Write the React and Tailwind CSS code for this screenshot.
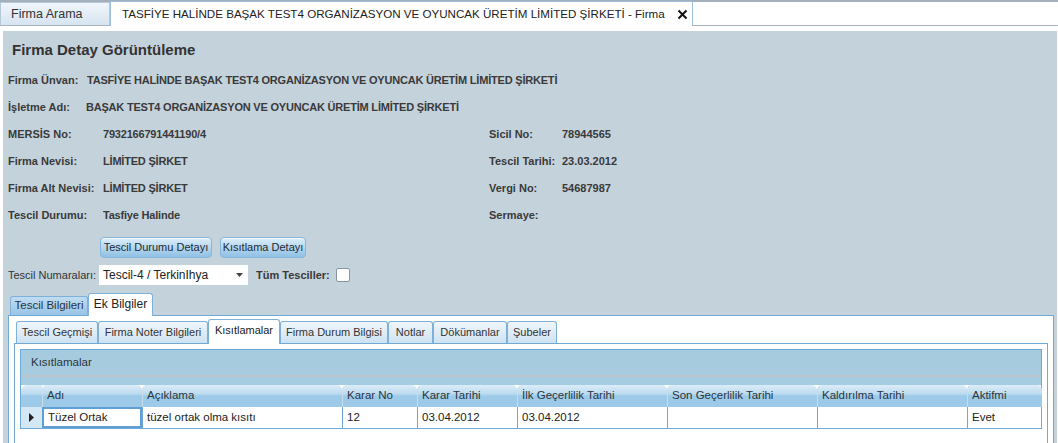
import React from "react";

const F = "font-['Liberation_Sans',Arial,sans-serif]";

function Row({ label, value, labelW, rLabel, rValue }) {
  return (
    <div className="flex h-[27px] items-center whitespace-nowrap text-[11px] font-bold text-[#3a3a3a]">
      <div className="shrink-0" style={{ width: labelW }}>{label}</div>
      <div className="w-[386px] shrink-0 tracking-[-0.2px]">{value}</div>
      {rLabel !== undefined && (
        <>
          <div className="w-[73px] shrink-0">{rLabel}</div>
          <div>{rValue}</div>
        </>
      )}
    </div>
  );
}

function Btn({ children, w }) {
  return (
    <div
      className="flex h-[21px] items-center justify-center whitespace-nowrap rounded-[4px] border border-[#86b6da] bg-gradient-to-b from-[#dcedf9] via-[#b5d7ef] to-[#8fc0e4] text-[11px] text-[#1e2a33] shadow-[inset_0_1px_0_#f2f9ff]"
      style={{ width: w }}
    >
      {children}
    </div>
  );
}

const innerTabs = [
  ["Tescil Geçmişi", 82],
  ["Firma Noter Bilgileri", 110],
  ["Kısıtlamalar", 72, true],
  ["Firma Durum Bilgisi", 108],
  ["Notlar", 45],
  ["Dökümanlar", 74],
  ["Şubeler", 50],
];

const cols = [
  ["Adı", 100],
  ["Açıklama", 200],
  ["Karar No", 75],
  ["Karar Tarihi", 100],
  ["İlk Geçerlilik Tarihi", 150],
  ["Son Geçerlilik Tarihi", 150],
  ["Kaldırılma Tarihi", 150],
  ["Aktifmi", 75],
];
const row = ["Tüzel Ortak", "tüzel ortak olma kısıtı", "12", "03.04.2012", "03.04.2012", "", "", "Evet"];

const headerBg =
  "bg-[linear-gradient(to_bottom,#dcecf8_0%,#bddbef_40%,#9dcae8_50%,#9dcae8_100%)]";

export default function App() {
  return (
    <div className={`${F} h-[443px] w-[1058px] overflow-hidden bg-white text-[#333]`}>
      {/* top tab strip */}
      <div className="h-[2px] bg-[#a3afba]" />
      <div className="flex h-[24px] items-end border-b border-[#a9b4bd]">
        <div className="flex h-[23px] w-[110px] items-center border border-b-0 border-[#b4c8da] bg-gradient-to-b from-[#f1f6fb] to-[#d6e4f1] pl-[10px] text-[12.5px] text-[#333]">
          Firma Arama
        </div>
        <div className="relative -mb-px flex h-[25px] w-[583px] items-center whitespace-nowrap border border-b-0 border-[#9cc0de] bg-white pl-[11px] text-[11.6px] text-[#222]">
          TASFİYE HALİNDE BAŞAK TEST4 ORGANİZASYON VE OYUNCAK ÜRETİM LİMİTED ŞİRKETİ - Firma
          <svg className="absolute right-[4px] top-[7px]" width="11" height="11" viewBox="0 0 11 11">
            <path d="M1.5 1.5 L9.5 9.5 M9.5 1.5 L1.5 9.5" stroke="#111" strokeWidth="2" />
          </svg>
        </div>
      </div>
      <div className="h-[5px]" />

      {/* main panel */}
      <div className="ml-[3px] mr-[1px] h-[412px] bg-[#c4d2dc]">
        <div className="h-[36px] pl-[9px] pt-[9px] text-[15px] font-bold leading-[20px] text-[#333]">
          Firma Detay Görüntüleme
        </div>
        <div className="pl-[5px]">
          <Row label="Firma Ünvan:" labelW={79} value="TASFİYE HALİNDE BAŞAK TEST4 ORGANİZASYON VE OYUNCAK ÜRETİM LİMİTED ŞİRKETİ" />
          <Row label="İşletme Adı:" labelW={78} value="BAŞAK TEST4 ORGANİZASYON VE OYUNCAK ÜRETİM LİMİTED ŞİRKETİ" />
          <Row label="MERSİS No:" labelW={95} value="7932166791441190/4" rLabel="Sicil No:" rValue="78944565" />
          <Row label="Firma Nevisi:" labelW={95} value="LİMİTED ŞİRKET" rLabel="Tescil Tarihi:" rValue="23.03.2012" />
          <Row label="Firma Alt Nevisi:" labelW={95} value="LİMİTED ŞİRKET" rLabel="Vergi No:" rValue="54687987" />
          <Row label="Tescil Durumu:" labelW={95} value="Tasfiye Halinde" rLabel="Sermaye:" rValue="" />
        </div>

        <div className="ml-[97px] mt-[8px] flex gap-[8px]">
          <Btn w={112}>Tescil Durumu Detayı</Btn>
          <Btn w={86}>Kısıtlama Detayı</Btn>
        </div>

        <div className="mt-[7px] flex h-[20px] items-center pl-[5px]">
          <div className="w-[91px] shrink-0 whitespace-nowrap text-[11px] text-[#333]">Tescil Numaraları:</div>
          <div className="relative flex h-[20px] w-[149px] shrink-0 items-center whitespace-nowrap bg-white pl-[4px] text-[12px] text-[#222]">
            Tescil-4 / TerkinIhya
            <svg className="absolute right-[5px] top-[8px]" width="7" height="4" viewBox="0 0 7 4">
              <path d="M0 0 H7 L3.5 4 Z" fill="#444" />
            </svg>
          </div>
          <div className="ml-[8px] whitespace-nowrap text-[11px] font-bold text-[#3a3a3a]">Tüm Tesciller:</div>
          <div className="ml-[6px] h-[14px] w-[14px] rounded-[2px] border border-[#8a96a0] bg-white" />
        </div>

        {/* outer tabs */}
        <div className="ml-[5px] mr-[3px] mt-[8px]">
          <div className="flex h-[22px] items-end pl-[2px]">
            <div className="flex h-[19px] w-[78px] items-center justify-center whitespace-nowrap rounded-t-[3px] border border-b-0 border-[#7fb0d8] bg-gradient-to-b from-[#c0dcf1] to-[#97c4e7] text-[11.5px] text-[#2a3540]">
              Tescil Bilgileri
            </div>
            <div className="relative z-10 -mb-px flex h-[23px] w-[65px] items-center justify-center whitespace-nowrap rounded-t-[3px] border border-b-0 border-[#7fb0d8] bg-white pb-[3px] text-[12px] text-[#222]">
              Ek Bilgiler
            </div>
          </div>
          <div className="h-[129px] border border-[#6fa9d8] bg-white px-[5px] pt-[3px]">
            {/* inner tabs */}
            <div className="flex h-[24px] items-end pl-[2px]">
              {innerTabs.map(([t, w, active]) =>
                active ? (
                  <div
                    key={t}
                    className="relative z-10 -mb-px flex h-[25px] items-center justify-center whitespace-nowrap rounded-t-[3px] border border-b-0 border-[#7fb0d8] bg-white pb-[3px] text-[11px] text-[#222]"
                    style={{ width: w }}
                  >
                    {t}
                  </div>
                ) : (
                  <div
                    key={t}
                    className="flex h-[22px] items-center justify-center whitespace-nowrap rounded-t-[3px] border border-b-0 border-[#7fb0d8] bg-gradient-to-b from-[#f0f6fb] to-[#cde2f2] text-[11px] text-[#333]"
                    style={{ width: w }}
                  >
                    {t}
                  </div>
                )
              )}
            </div>
            <div className="h-[120px] border border-[#6fa9d8] bg-white pl-[5px] pr-[5px] pt-[5px]">
              <div className="border border-b-0 border-[#6fa9d8]">
                <div className="flex h-[25px] items-center bg-[#a6cbde] pl-[10px] text-[11.5px] text-[#2a3540]">
                  Kısıtlamalar
                </div>
                <div className="h-[2px] bg-[#bcc7cd]" />
                <div className="h-[8px] bg-[#a6cce2]" />
                <div className="flex h-[22px]">
                  <div className={`w-[21px] shrink-0 rounded-tl-[6px] ${headerBg}`} />
                  {cols.map(([c, w]) => (
                    <div
                      key={c}
                      className={`flex shrink-0 items-center whitespace-nowrap rounded-t-[5px] border-l border-[#c7dded] ${headerBg} pl-[4px] text-[11.5px] text-[#2a3540]`}
                      style={{ width: w }}
                    >
                      {c}
                    </div>
                  ))}
                </div>
                <div className="flex h-[22px] border-b border-[#6fa9d8]">
                  <div className="flex w-[21px] shrink-0 items-center justify-center bg-[#d4e7f4]">
                    <svg width="5" height="9" viewBox="0 0 5 9">
                      <path d="M0 0 L5 4.5 L0 9 Z" fill="#222" />
                    </svg>
                  </div>
                  {row.map((v, i) => (
                    <div
                      key={i}
                      className={`flex shrink-0 items-center whitespace-nowrap pl-[4px] text-[11.5px] text-[#222] ${
                        i === 0 ? "border-2 border-[#5f9fd3] bg-white" : "border-l border-[#6fa9d8]"
                      }`}
                      style={{ width: cols[i][1] }}
                    >
                      {v}
                    </div>
                  ))}
                </div>
              </div>
            </div>
          </div>
        </div>
      </div>
    </div>
  );
}
